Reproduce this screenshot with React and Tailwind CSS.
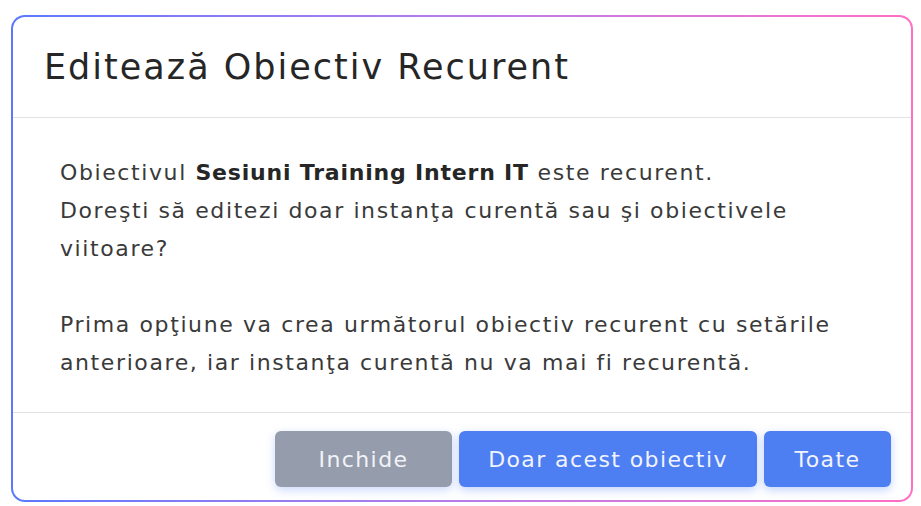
import React from 'react';

const FONT = { fontFamily: '"DejaVu Sans", "Noto Sans", sans-serif' };

// Modal asking how to edit a recurring objective
const EditRecurringModal = () => {
  return (
    <div className="rounded-[14px] bg-gradient-to-r from-[#5a78ff] via-[#b77ce8] to-[#ff6ec4] p-[2px]">
      <div className="flex flex-col rounded-[12px] bg-white">
        {/* Header */}
        <div className="flex h-[101px] items-center border-b border-[#e2e2e2] px-[31px]">
          <h5 className="text-[35px] font-normal tracking-[2px] text-[#262626]">Editează Obiectiv Recurent</h5>
        </div>

        {/* Body */}
        <div className="whitespace-nowrap border-b border-[#e2e2e2] pb-[30px] pl-[47px] pr-[40px] pt-[36px] text-[22px] leading-[38px] tracking-[1.6px] text-[#3a3a3a]">
          Obiectivul <span className="font-bold tracking-[0.8px] text-[#262626]">Sesiuni Training Intern IT</span> este recurent.
          <br />
          Doreşti să editezi doar instanţa curentă sau şi obiectivele
          <br />
          viitoare?
          <br />
          <br />
          Prima opţiune va crea următorul obiectiv recurent cu setările
          <br />
          anterioare, iar instanţa curentă nu va mai fi recurentă.
        </div>

        {/* Footer */}
        <div className="flex justify-end gap-[7px] pb-[13px] pr-[20px] pt-[18px]">
          <button className="h-[56px] w-[177px] rounded-[6px] bg-[#959cab] text-[22px] tracking-[1.4px] text-[#f1f3f8] shadow-[0_3px_10px_rgba(77,126,242,0.3)]">
            Inchide
          </button>
          <button className="h-[56px] w-[298px] rounded-[6px] bg-[#4d7ef2] text-[22px] tracking-[1.4px] text-[#f1f4ff] shadow-[0_3px_10px_rgba(77,126,242,0.35)]">
            Doar acest obiectiv
          </button>
          <button className="h-[56px] w-[127px] rounded-[6px] bg-[#4d7ef2] text-[22px] tracking-[1.4px] text-[#f1f4ff] shadow-[0_3px_10px_rgba(77,126,242,0.35)]">
            Toate
          </button>
        </div>
      </div>
    </div>
  );
};

export default function App() {
  return (
    <div className="min-h-[506px] w-[921px] bg-white pl-[11px] pr-[8px] pt-[15px]" style={FONT}>
      <EditRecurringModal />
    </div>
  );
}
